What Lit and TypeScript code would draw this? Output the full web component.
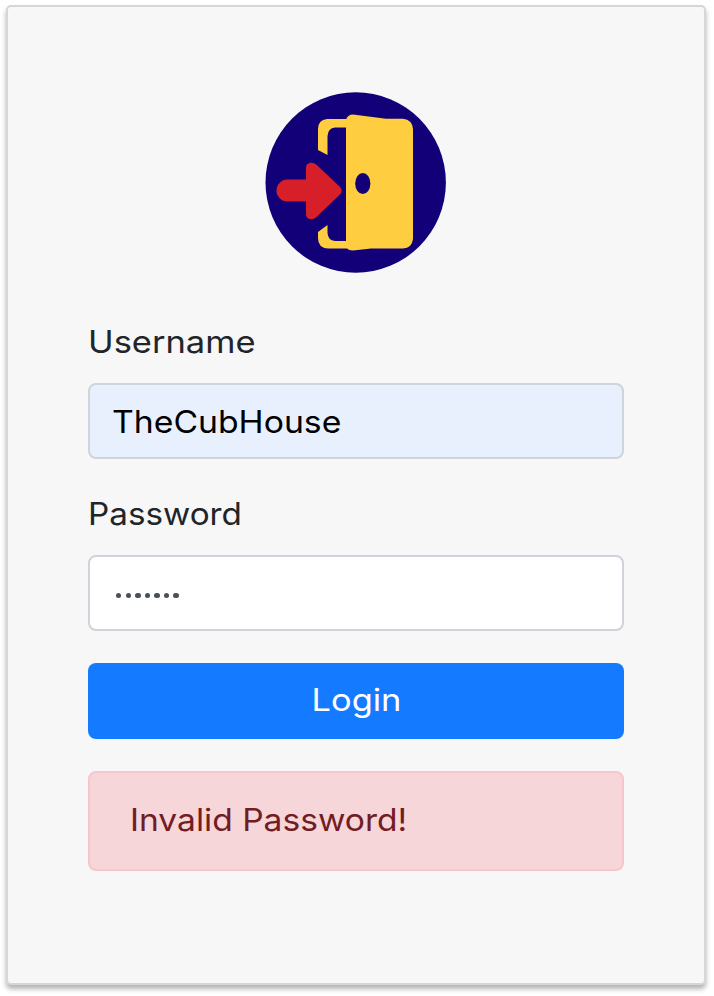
import { LitElement, html, css, svg } from "lit";
import { customElement, state } from "lit/decorators.js";

const doorLogo = svg`
  <circle cx="99.700" cy="98.500" r="90.2" fill="#120078"/>
  <g fill="#ffcd40">
    <path d="M91 35H71Q62 36 62 45V66L71.500 71V52Q72 44 79 43.500H91Z"/>
    <path d="M91 164.500H72Q62 164 62 154V148L71.500 141V149Q72 156.500 79 157H91Z"/>
    <path d="M90 35.500Q92 30.500 97 30.500L130 34.800H147Q156.500 36 157 45V155Q156 164 147 164.500H115L97 166.500Q92 166.500 90 163Z"/>
  </g>
  <ellipse cx="106.800" cy="99.500" rx="7.600" ry="10.500" fill="#120078"/>
  <path fill="#d71f2a" d="M31.500 95.500H50V84Q50 79 55 78.800Q58 78.600 60.500 80.800L84 103Q87.300 107 84 110.500L60.500 133Q58 135.500 55 135.300Q50 135 50 130V117.500H31.500A11 11 0 0 1 31.500 95.500Z"/>
`;

@customElement("app-root")
export class AppRoot extends LitElement {
  @state() private username = "TheCubHouse";
  @state() private password = "secret1";
  @state() private error = "Invalid Password!";

  static styles = css`
    :host {
      display: block;
      box-sizing: border-box;
      height: 996px;
      padding: 5px 8px 10px 6px;
      background: #fff;
      overflow: hidden;
      font: 400 31px/48px Inter, "Liberation Sans", sans-serif;
      color: #212529;
    }
    * { box-sizing: border-box; }
    .card {
      display: flex;
      flex-direction: column;
      height: 980px;
      padding: 77px 80px 0;
      border: 2px solid #d6d6d6;
      border-radius: 5px;
      background: #f7f7f7;
      box-shadow: 0 4px 5px rgba(0, 0, 0, 0.3);
    }
    .logo {
      display: block;
      width: 200px;
      height: 200px;
      margin: 0 auto 35px;
    }
    .field { display: flex; flex-direction: column; margin-bottom: 32px; }
    .field label { height: 48px; margin-bottom: 16px; line-height: 46px; }
    .control {
      display: flex;
      align-items: center;
      height: 76px;
      padding: 0 24px;
      border: 2px solid #ced4da;
      border-radius: 8px;
      background: #fff;
      color: #495057;
    }
    .filled { padding: 1px 22px 0; background: #e8f0fe; color: #000; }
    .wide { display: inline-block; transform-origin: left center; }
    .username { transform: scaleX(1.112); }
    .password { transform: scaleX(1.073); }
    .value { transform: scaleX(1.088); }
    .message { transform: scaleX(1.083); }
    .action { transform: scaleX(1.11); transform-origin: center; }
    .dots { display: flex; gap: 4.2px; padding: 5px 0 0 2px; }
    .dot { width: 5.4px; height: 5.4px; border-radius: 50%; background: #495057; }
    .login {
      height: 76px;
      margin: 0 0 32px;
      padding: 0 0 3px;
      border: 0;
      border-radius: 8px;
      background: #147aff;
      color: #fff;
      font: inherit;
    }
    .alert {
      height: 100px;
      padding: 23px 40px;
      border: 2px solid #f5c6cb;
      border-radius: 8px;
      background: #f6d6d9;
      color: #721c24;
    }
  `;

  render() {
    return html`
      <form class="card" @submit=${(e: Event) => e.preventDefault()}>
        <svg class="logo" viewBox="0 0 200 200" aria-hidden="true">${doorLogo}</svg>
        <div class="field">
          <label><span class="wide username">Username</span></label>
          <div class="control filled"><span class="wide value">${this.username}</span></div>
        </div>
        <div class="field">
          <label><span class="wide password">Password</span></label>
          <div class="control">
            <div class="dots">${[...this.password].map(() => html`<span class="dot"></span>`)}</div>
          </div>
        </div>
        <button class="login"><span class="wide action">Login</span></button>
        <div class="alert" role="alert"><span class="wide message">${this.error}</span></div>
      </form>
    `;
  }
}
